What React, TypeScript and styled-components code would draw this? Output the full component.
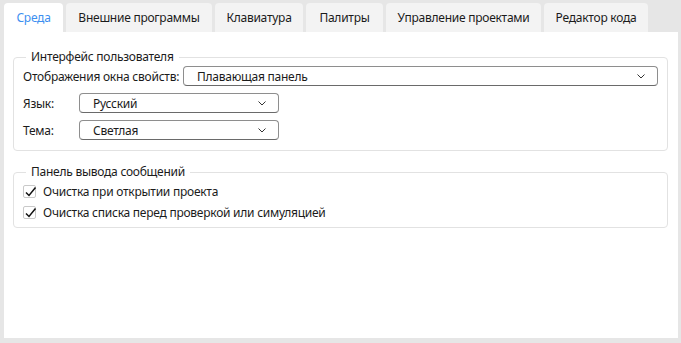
import * as React from "react";
import styled, { createGlobalStyle } from "styled-components";

const GlobalStyle = createGlobalStyle`
  html, body {
    margin: 0;
    padding: 0;
    background: #e6e6e6;
  }
  body {
    font-family: "Noto Sans", "Open Sans", sans-serif;
    font-size: 12px;
    letter-spacing: -0.25px;
    color: #1b1b1b;
  }
`;

const Window = styled.div`
  width: 681px;
  height: 343px;
  box-sizing: border-box;
  padding: 3px 3px 5px 4px;
  display: flex;
  flex-direction: column;
`;

const TabBar = styled.div`
  display: flex;
  gap: 3px;
  height: 29px;
  flex-shrink: 0;
`;

const Tab = styled.div<{ $active?: boolean; $w: number }>`
  width: ${(p) => p.$w}px;
  height: 29px;
  display: flex;
  align-items: center;
  justify-content: center;
  border-radius: 4px 4px 0 0;
  background: ${(p) => (p.$active ? "#ffffff" : "#f3f3f3")};
  color: ${(p) => (p.$active ? "#3d8ff0" : "#1b1b1b")};
  white-space: nowrap;
  font-size: 12px;
`;

const Panel = styled.div`
  flex: 1;
  background: #ffffff;
  padding: 17px 10px 0 9px;
  display: flex;
  flex-direction: column;
  gap: 13px;
`;

const Group = styled.fieldset<{ $pb?: number; $gap?: number }>`
  margin: 0;
  padding: 0 9px ${(p) => p.$pb ?? 10}px 9px;
  border: 1px solid #e2e2e2;
  border-radius: 4px;
  display: flex;
  flex-direction: column;
  gap: ${(p) => p.$gap ?? 7}px;
`;

const Legend = styled.legend`
  margin-left: 3px;
  padding: 0 5px;
  line-height: 16px;
  font-size: 12px;
`;

const Row = styled.div`
  display: flex;
  align-items: center;
  height: 20px;
  &:first-of-type {
    margin-top: 1px;
  }
`;

const Label = styled.span<{ $w: number }>`
  width: ${(p) => p.$w}px;
  flex-shrink: 0;
  white-space: nowrap;
`;

const Select = styled.div<{ $w?: number }>`
  box-sizing: border-box;
  height: 20px;
  ${(p) => (p.$w ? `width: ${p.$w}px;` : "flex: 1;")}
  border: 1px solid #8e8e8e;
  border-bottom-color: #6a6a6a;
  border-radius: 4px;
  display: flex;
  align-items: center;
  justify-content: space-between;
  padding: 0 12px 0 13px;
`;

const Check = styled.div`
  display: flex;
  align-items: center;
  height: 18px;
  gap: 7px;
  &:first-of-type {
    margin-top: 2px;
  }
`;

const Box = styled.span`
  width: 13px;
  height: 13px;
  box-sizing: border-box;
  border: 1px solid #c9c9c9;
  border-radius: 2px;
  position: relative;
  flex-shrink: 0;
  svg {
    position: absolute;
    left: 0px;
    top: -1px;
  }
`;

const Chevron = () => (
  <svg width="8" height="5" viewBox="0 0 8 5">
    <path d="M0.5 0.5 L4 4 L7.5 0.5" fill="none" stroke="#333" strokeWidth="1" />
  </svg>
);

const Tick = () => (
  <svg width="14" height="14" viewBox="0 0 14 14">
    <path d="M2 7.5 L5 10.5 L11.5 2.5" fill="none" stroke="#111" strokeWidth="1.5" />
  </svg>
);

const tabs = [
  { t: "Среда", w: 59 },
  { t: "Внешние программы", w: 146 },
  { t: "Клавиатура", w: 88 },
  { t: "Палитры", w: 77 },
  { t: "Управление проектами", w: 155 },
  { t: "Редактор кода", w: 104 },
];

export default function App() {
  return (
    <>
      <GlobalStyle />
      <Window>
        <TabBar>
          {tabs.map((tab, i) => (
            <Tab key={tab.t} $w={tab.w} $active={i === 0}>
              {tab.t}
            </Tab>
          ))}
        </TabBar>
        <Panel>
          <Group>
            <Legend>Интерфейс пользователя</Legend>
            <Row>
              <Label $w={160}>Отображения окна свойств:</Label>
              <Select>
                <span>Плавающая панель</span>
                <Chevron />
              </Select>
            </Row>
            <Row>
              <Label $w={56}>Язык:</Label>
              <Select $w={200}>
                <span>Русский</span>
                <Chevron />
              </Select>
            </Row>
            <Row>
              <Label $w={56}>Тема:</Label>
              <Select $w={200}>
                <span>Светлая</span>
                <Chevron />
              </Select>
            </Row>
          </Group>
          <Group $gap={3} $pb={6}>
            <Legend>Панель вывода сообщений</Legend>
            <Check>
              <Box>
                <Tick />
              </Box>
              <span>Очистка при открытии проекта</span>
            </Check>
            <Check>
              <Box>
                <Tick />
              </Box>
              <span>Очистка списка перед проверкой или симуляцией</span>
            </Check>
          </Group>
        </Panel>
      </Window>
    </>
  );
}
